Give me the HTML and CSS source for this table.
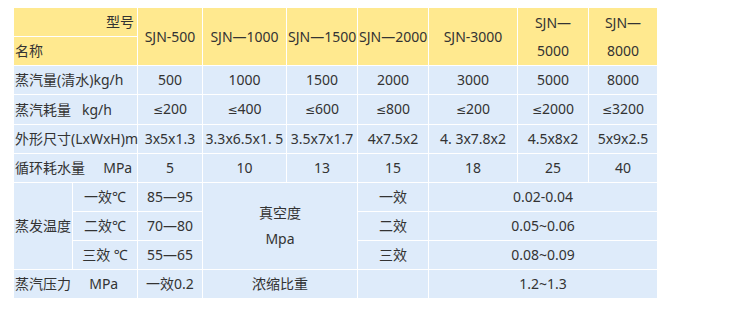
FILE: index.html
```html
<!DOCTYPE html>
<html lang="zh-CN">
  <head>
    <meta charset="UTF-8" />
    <meta name="viewport" content="width=device-width, initial-scale=1.0" />
    <title>技术参数</title>
    <link rel="stylesheet" href="styles.css">
  </head>
  <body>
    <table class="spec">
      <colgroup>
        <col style="width: 59px" />
        <col style="width: 65px" />
        <col style="width: 65px" />
        <col style="width: 84px" />
        <col style="width: 71px" />
        <col style="width: 71px" />
        <col style="width: 89px" />
        <col style="width: 71px" />
        <col style="width: 69px" />
      </colgroup>
      <thead>
        <tr>
          <th colspan="2" class="right">型号</th>
          <th rowspan="2">SJN-500</th>
          <th rowspan="2">SJN—1000</th>
          <th rowspan="2">SJN—1500</th>
          <th rowspan="2">SJN—2000</th>
          <th rowspan="2">SJN-3000</th>
          <th rowspan="2">SJN—<br />5000</th>
          <th rowspan="2">SJN—<br />8000</th>
        </tr>
        <tr>
          <th colspan="2" class="left">名称</th>
        </tr>
      </thead>
      <tbody>
        <tr>
          <td colspan="2" class="left">蒸汽量(清水)kg/h</td>
          <td>500</td><td>1000</td><td>1500</td><td>2000</td><td>3000</td><td>5000</td><td>8000</td>
        </tr>
        <tr>
          <td colspan="2" class="left">蒸汽耗量&nbsp;&nbsp; kg/h</td>
          <td><span class="sym">≤</span>200</td>
          <td><span class="sym">≤</span>400</td>
          <td><span class="sym">≤</span>600</td>
          <td><span class="sym">≤</span>800</td>
          <td><span class="sym">≤</span>200</td>
          <td><span class="sym">≤</span>2000</td>
          <td><span class="sym">≤</span>3200</td>
        </tr>
        <tr>
          <td colspan="2" class="left">外形尺寸(LxWxH)m</td>
          <td>3x5x1.3</td><td>3.3x6.5x1. 5</td><td>3.5x7x1.7</td><td>4x7.5x2</td><td>4. 3x7.8x2</td><td>4.5x8x2</td><td>5x9x2.5</td>
        </tr>
        <tr>
          <td colspan="2" class="left">循环耗水量&nbsp;&nbsp;&nbsp;&nbsp; MPa</td>
          <td>5</td><td>10</td><td>13</td><td>15</td><td>18</td><td>25</td><td>40</td>
        </tr>
        <tr>
          <td rowspan="3">蒸发温度</td>
          <td>一效℃</td>
          <td>85—95</td>
          <td colspan="2" rowspan="3" class="vacuum">真空度<br />Mpa</td>
          <td>一效</td>
          <td colspan="3">0.02-0.04</td>
        </tr>
        <tr>
          <td>二效℃</td>
          <td>70—80</td>
          <td>二效</td>
          <td colspan="3">0.05~0.06</td>
        </tr>
        <tr>
          <td>三效 ℃</td>
          <td>55—65</td>
          <td>三效</td>
          <td colspan="3">0.08~0.09</td>
        </tr>
        <tr>
          <td colspan="2" class="left">蒸汽压力&nbsp;&nbsp;&nbsp;&nbsp; MPa</td>
          <td>一效0.2</td>
          <td colspan="2">浓缩比重</td>
          <td></td>
          <td colspan="3">1.2~1.3</td>
        </tr>
      </tbody>
    </table>
  </body>
</html>
```

FILE: styles.css
```css
body {
  margin: 0;
  font-family: "Noto Sans", "Noto Sans CJK SC", sans-serif;
  font-size: 14px;
  color: #333;
  background: #fff;
}

.spec {
  margin: 7px 0 0 13px;
  width: 645px;
  table-layout: fixed;
  border-collapse: collapse;
}

.spec th,
.spec td {
  border: 1px solid #fff;
  padding: 0 1px;
  height: 28px;
  line-height: 28px;
  text-align: center;
  white-space: nowrap;
  font-weight: normal;
}

.spec th {
  background: #ffe98f;
}

.spec td {
  background: #deebfa;
}

.spec .left {
  text-align: left;
}

.spec .right {
  text-align: right;
  padding-right: 3px;
}

.spec .vacuum {
  line-height: 26px;
}

/* narrow less-or-equal sign, the CJK one is full width */
.sym {
  font-family: "DejaVu Sans", sans-serif;
  font-size: 12px;
}
```
